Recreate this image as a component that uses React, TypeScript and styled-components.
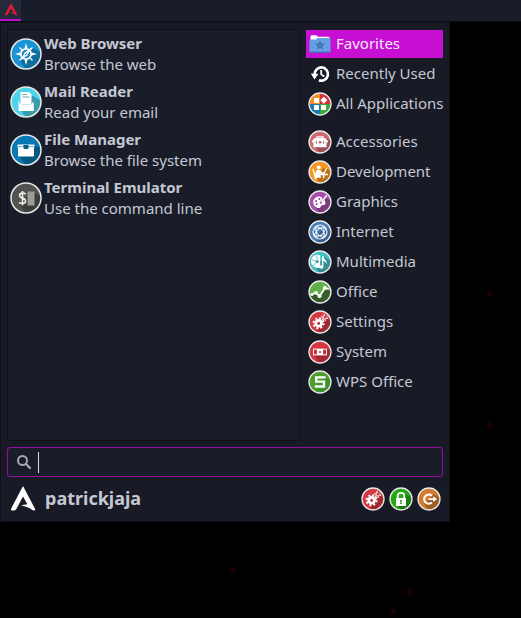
import React from "react";
import styled, { createGlobalStyle } from "styled-components";

const GlobalStyle = createGlobalStyle`
  *, *::before, *::after { box-sizing: border-box; }
  html, body, #root { min-height: 100vh; }
  body {
    margin: 0;
    background: #000;
    color: #c5c8d2;
    font-family: "Noto Sans", sans-serif;
    font-size: 15px;
    line-height: 21px;
  }
  button, input { font: inherit; color: inherit; }
  svg { display: block; flex: none; }
`;

const Desktop = styled.div`
  position: relative;
  min-height: 100vh;
  overflow: hidden;
`;

const Speck = styled.span<{ $x: number; $y: number }>`
  position: absolute;
  left: ${(p) => p.$x}px;
  top: ${(p) => p.$y}px;
  width: 10px;
  height: 12px;
  background: radial-gradient(closest-side, #2c0003, #080001 60%, transparent);
`;

const TopBar = styled.header`
  height: 22px;
  background: #191d29;
  border-bottom: 1px solid #0d0f16;
`;

const MenuButton = styled.button`
  display: flex;
  justify-content: center;
  width: 21px;
  height: 21px;
  padding: 2px 0 0;
  border: 0;
  border-bottom: 2px solid #bd0ecb;
  background: #242a3b;
`;

const Panel = styled.main`
  display: flex;
  flex-direction: column;
  gap: 6px;
  width: min(450px, 100%);
  padding: 6px 6px 7px;
  border: 1px solid #0f1119;
  background: #181a26;
`;

const Columns = styled.div`
  display: grid;
  grid-template-columns: minmax(0, 1fr) 137px;
  gap: 6px;
  min-height: 412px;
`;

const Launchers = styled.ul`
  margin: 0;
  padding: 3px 2px;
  border: 1px solid #0f1119;
  background: #191d29;
  list-style: none;
  display: flex;
  flex-direction: column;
  gap: 6px;
`;

const Launcher = styled.button`
  display: flex;
  align-items: center;
  gap: 2px;
  width: 100%;
  padding: 0;
  border: 0;
  background: none;
  text-align: left;
`;

const LauncherText = styled.span`
  display: flex;
  flex-direction: column;
`;

const Title = styled.strong`
  font-weight: 700;
`;

const Categories = styled.nav`
  display: flex;
  flex-direction: column;
  gap: 10px;
  padding-top: 1px;
`;

const CategoryGroup = styled.div`
  display: flex;
  flex-direction: column;
  gap: 2px;
`;

const Category = styled.button<{ $active?: boolean }>`
  display: flex;
  align-items: center;
  gap: 4px;
  height: 28px;
  padding: 0 0 0 2px;
  border: 0;
  background: ${(p) => (p.$active ? "#c70fd3" : "transparent")};
  color: ${(p) => (p.$active ? "#f3e9f7" : "inherit")};
  text-align: left;
  white-space: nowrap;
`;

const CategoryLabel = styled.span`
  padding-bottom: 2px;
`;

const SearchField = styled.label`
  display: flex;
  align-items: center;
  gap: 6px;
  height: 30px;
  padding: 0 8px;
  border: 1px solid #960da3;
  border-radius: 3px;
  background: #191d29;
`;

const Caret = styled.span`
  width: 1px;
  height: 21px;
  background: #d8dae2;
`;

const SearchInput = styled.input`
  flex: 1;
  min-width: 0;
  padding: 0;
  border: 0;
  outline: 0;
  background: transparent;
`;

const Footer = styled.footer`
  display: flex;
  align-items: center;
  padding-top: 1px;
  height: 31px;
`;

const UserButton = styled.button`
  display: flex;
  align-items: center;
  gap: 8px;
  padding: 0 0 2px 2px;
  border: 0;
  background: none;
  font-size: 18px;
  font-weight: 700;
`;

const Actions = styled.div`
  display: flex;
  gap: 4px;
  margin-left: auto;
  padding-right: 2px;
`;

const ActionButton = styled.button`
  padding: 0;
  border: 0;
  background: none;
`;

type DiscProps = {
  id: string;
  size: number;
  color: string;
  shade: string;
  children: React.ReactNode;
};

function Disc({ id, size, color, shade, children }: DiscProps) {
  const c = size / 2;
  const r = c - 1;
  return (
    <svg width={size} height={size} viewBox={`0 0 ${size} ${size}`} aria-hidden="true">
      <clipPath id={id}>
        <circle cx={c} cy={c} r={r} />
      </clipPath>
      <g clipPath={`url(#${id})`}>
        <rect width={size} height={size} fill={color} />
        <path
          d={`M${c * 0.6} ${c * 1.4}L${c * 1.4} ${c * 0.6}L${size * 1.2} ${size * 0.6}V${size * 1.2}H${size * 0.65}Z`}
          fill={shade}
        />
      </g>
      {children}
      <circle cx={c} cy={c} r={r} fill="none" stroke="#e9e9e5" strokeWidth={size > 24 ? 1.5 : 1.3} />
    </svg>
  );
}

function ArcoLogo({ size, color }: { size: number; color: string }) {
  return (
    <svg width={size} height={size} viewBox="0 0 28 28" aria-hidden="true">
      <path
        d="M14 2L26 24.8Q26.6 26.6 25 26.6Q23 26.4 21.2 24.6Q17.6 22.6 12 21.2L18.4 20.2L14 12.4L7.4 25Q6.6 26.6 4.4 26.6H3Q1.6 26.4 2.2 24.6Z"
        fill={color}
      />
    </svg>
  );
}

const compass = (
  <Disc id="web" size={32} color="#1a94d6" shade="#116d9e">
    <path
      d="M16 5L17.4 10L16 12L14.6 10ZM16 27L17.4 22L16 20L14.6 22ZM5 16L10 14.6L12 16L10 17.4ZM27 16L22 14.6L20 16L22 17.4Z"
      fill="#fff"
    />
    <path d="M9.5 9.5L12 12M20 20L22.5 22.5M20 12L22.5 9.5M9.5 22.5L12 20" stroke="#fff" strokeWidth="1.2" />
    <circle cx="16" cy="16" r="5.2" fill="#1784c0" stroke="#fff" strokeWidth="1.8" />
    <path d="M21.5 9.5L17.4 17.4L10.5 22.5L14.6 14.6Z" fill="#fff" />
    <path d="M14.8 17.2L17.2 14.8" stroke="#1784c0" strokeWidth="1" />
  </Disc>
);

const mail = (
  <Disc id="mail" size={32} color="#4ed3ed" shade="#389eaf">
    <path d="M10.5 6H19L21.5 8.5V20H10.5Z" fill="#fff" />
    <path d="M12.5 8.5H17M12.5 11H19.5" stroke="#69aeba" strokeWidth="1" />
    <path d="M9 14V16.5L11.5 18H21L23.5 16.5V14L24 24Q24 25 23 25H9.5Q8.5 25 8.5 24V15Z" fill="#fff" />
    <path d="M9 15.5L12 18.5H20.5L23.5 15.5" fill="none" stroke="#acdbe2" strokeWidth="0.7" />
  </Disc>
);

const files = (
  <Disc id="files" size={32} color="#0879b4" shade="#065782">
    <path d="M7.5 10.5H24.5V13.5H7.5ZM8 13.4H24V21.5Q24 22.5 23 22.5H9Q8 22.5 8 21.5Z" fill="#fff" />
    <path d="M8 12.6H24" stroke="#5aa0c5" strokeWidth="0.9" />
    <path d="M13.5 11H18.5V14Q18.5 15 17.5 15H14.5Q13.5 15 13.5 14Z" fill="#065d8b" />
  </Disc>
);

const terminal = (
  <Disc id="term" size={32} color="#50534f" shade="#3c3e3b">
    <rect x="17.5" y="9.5" width="7" height="14" fill="#9b9d99" />
    <path
      d="M15.7 12.1Q14.5 11.1 12.5 11.1Q9.6 11.1 9.6 13.5Q9.6 15.3 12.3 16Q15.6 16.8 15.6 19Q15.6 21.5 12.4 21.5Q10.3 21.5 9 20.4M12.5 9V23.5"
      fill="none"
      stroke="#f4f4f2"
      strokeWidth="1.5"
    />
  </Disc>
);

const folder = (
  <svg width="24" height="24" viewBox="0 0 24 24" aria-hidden="true">
    <path d="M2.5 6V4.5Q2.5 3.2 3.8 3.2H8.2L9.8 4.7H20Q21.5 4.7 21.5 6V10H2.5Z" fill="#fff" />
    <path d="M1.5 8.5Q1.5 7.5 2.5 7.5H8L9.5 6H21.5Q22.5 6 22.5 7V19.5Q22.5 20.5 21.5 20.5H2.5Q1.5 20.5 1.5 19.5Z" fill="#66a0e4" />
    <path d="M1.5 20.2H22.5" stroke="#3b65ad" strokeWidth="1" />
    <path
      d="M12 9L13.2 11.8L16.2 12.1L13.9 14.1L14.6 17L12 15.5L9.4 17L10.1 14.1L7.8 12.1L10.8 11.8Z"
      fill="#4a78b8"
      stroke="#416fb0"
      strokeWidth="0.8"
    />
  </svg>
);

const history = (
  <svg width="24" height="24" viewBox="0 0 24 24" aria-hidden="true">
    <path d="M6.8 13A6.6 6.6 0 1 1 10.9 18.2" fill="none" stroke="#fff" strokeWidth="2.7" />
    <path d="M2.8 11.6L10.4 12L6.4 17.4Z" fill="#fff" />
    <path d="M13.2 8V12.4L16.2 14.6" fill="none" stroke="#fff" strokeWidth="1.8" />
  </svg>
);

const allApps = (
  <svg width="24" height="24" viewBox="0 0 24 24" aria-hidden="true">
    <path d="M12 12V1A11 11 0 0 0 1 12Z" fill="#f68b22" />
    <path d="M12 12V1A11 11 0 0 1 23 12Z" fill="#d4303a" />
    <path d="M12 12H1A11 11 0 0 0 12 23Z" fill="#167bb0" />
    <path d="M12 12V23A11 11 0 0 0 23 12Z" fill="#35a93c" />
    <path d="M6 6H11V11H6ZM6 13H11V18H6ZM13 13H18V18H13ZM15.8 4.7L19.3 8.2L15.8 11.7L12.3 8.2Z" fill="#fff" />
    <circle cx="12" cy="12" r="11" fill="none" stroke="#e9e9e5" strokeWidth="1.3" />
  </svg>
);

const toolbox = (
  <Disc id="acc" size={24} color="#cf6a72" shade="#9d4f56">
    <path d="M9 8V6.9H15V8" fill="none" stroke="#fff" strokeWidth="1.2" />
    <path d="M6.8 8H17.2L20 11V12.4H4V11ZM5.4 12.8H18.6V17.3H5.4Z" fill="#fff" />
    <path d="M8.5 10.5V14M15.5 10.5V14" stroke="#c4717a" strokeWidth="0.8" />
    <circle cx="12" cy="12.3" r="1.2" fill="#bc5c66" />
  </Disc>
);

const develop = (
  <Disc id="dev" size={24} color="#f69620" shade="#bb7116">
    <circle cx="10.7" cy="7.4" r="2" fill="#fff" />
    <path d="M8.8 10H12L14 12.2H17V13.7H12.8V17.8H7L6.8 14Z" fill="#fff" />
    <path d="M5 8.8L6.8 16H8.5M6.5 18H9M13 14.5H20M15.7 15V18.2M16.5 13L18.6 7.8" fill="none" stroke="#fff" strokeWidth="1.3" />
  </Disc>
);

const palette = (
  <Disc id="gfx" size={24} color="#a84eae" shade="#7c3a82">
    <path d="M12 6.6C8.2 6.2 5.2 9 5.2 12.2C5.2 15.6 8 18 11 18C13.2 18 12.2 15.7 14 15.2C15.7 14.8 17.7 15.4 17.4 12.4Q17.2 10.4 15.5 9Z" fill="#fff" />
    <circle cx="8.2" cy="11" r="1" fill="#8c4191" />
    <circle cx="11.3" cy="9" r="1" fill="#8c4191" />
    <circle cx="8.7" cy="14.2" r="1" fill="#8c4191" />
    <path d="M12.4 13.3L15.8 8.7" stroke="#8c4191" strokeWidth="2" />
    <path d="M14.5 10.7L18.8 5.3M13.2 12.4L15 10" stroke="#fff" strokeWidth="1.5" />
  </Disc>
);

const globe = (
  <Disc id="net" size={24} color="#467db5" shade="#365f8c">
    <circle cx="12" cy="12" r="7" fill="none" stroke="#f0f5fa" strokeWidth="1.2" />
    <g fill="none" stroke="#f0f5fa" strokeWidth="0.9">
      <ellipse cx="12" cy="12" rx="3" ry="7" transform="rotate(-40 12 12)" />
      <ellipse cx="12" cy="12" rx="3" ry="7" transform="rotate(50 12 12)" />
      <path d="M7 7.5Q12 10 17 7.5M7 16.5Q12 14 17 16.5M7.5 7Q10 12 7.5 17M16.5 7Q14 12 16.5 17" />
    </g>
  </Disc>
);

const media = (
  <Disc id="media" size={24} color="#42c0c5" shade="#318e92">
    <path d="M12.2 5.2A6.6 6.6 0 1 0 12.2 17.4Z" fill="#fff" />
    <path d="M7.8 11L3.8 9.8M8 12.8L5.2 16M9.2 9.5L8.7 5.4" stroke="#47b7bc" strokeWidth="0.8" />
    <circle cx="9.2" cy="11.5" r="1.6" fill="#389fa4" />
    <path d="M14 16.5V6.2H15.4Q15.5 8.5 17.5 10Q19.5 12 18.4 14.2Q18 11.8 15.4 10.8V17" fill="#fff" />
    <ellipse cx="13.3" cy="17" rx="2.1" ry="1.7" fill="#fff" />
  </Disc>
);

const office = (
  <Disc id="office" size={24} color="#62af48" shade="#62af48">
    <path d="M2 15L8 12.5L11.7 16.5L17.3 7.5L22.4 11.5Q21.5 22.4 12 22.4Q4 22 2 15Z" fill="#365c2b" />
    <path d="M3.6 14.5L8 12.8L11.6 16.4L16.8 8.2L20.7 8.8" fill="none" stroke="#fff" strokeWidth="1.7" />
    <g fill="#fff">
      <circle cx="3.9" cy="14.4" r="1.5" />
      <circle cx="8" cy="12.8" r="1.9" />
      <circle cx="11.6" cy="16.2" r="1.9" />
      <circle cx="16.9" cy="8" r="2" />
    </g>
  </Disc>
);

function Gears({ id }: { id: string }) {
  return (
    <Disc id={id} size={24} color="#d43a43" shade="#a12830">
      <circle cx="10.6" cy="13.2" r="2.9" fill="none" stroke="#fff" strokeWidth="2.8" />
      <circle cx="10.6" cy="13.2" r="5" fill="none" stroke="#fff" strokeWidth="2" strokeDasharray="2 1.93" />
      <circle cx="16.6" cy="7.5" r="1.7" fill="none" stroke="#fff" strokeWidth="1.1" strokeDasharray="8 2.68" />
      <circle cx="16.6" cy="7.5" r="2.9" fill="none" stroke="#fff" strokeWidth="1.2" strokeDasharray="1.3 1.74" />
      <path d="M16.6 7.5L18.6 5.2" stroke="#c63a42" strokeWidth="1.4" />
    </Disc>
  );
}

const system = (
  <Disc id="sys" size={24} color="#d4353f" shade="#a12830">
    <rect x="5.7" y="9.2" width="12.6" height="5.6" fill="none" stroke="#fff" strokeWidth="1.2" />
    <path d="M6.3 9.8H8.6V14.2H6.3ZM15.4 9.8H17.7V14.2H15.4Z" fill="#a52933" />
    <path d="M8.8 9H15.2V15H8.8Z" fill="#fff" />
    <rect x="10.7" y="11" width="2.6" height="2" fill="#ce7078" />
  </Disc>
);

const wps = (
  <Disc id="wps" size={24} color="#4a9d2f" shade="#40932a">
    <path d="M17.6 7.4H8.2V11.6H16V16.5H6.8" fill="none" stroke="#fff" strokeWidth="2.3" />
  </Disc>
);

const lock = (
  <Disc id="lock" size={24} color="#24a815" shade="#1c7c14">
    <path d="M8.7 12V8.6Q8.7 5.8 12 5.8Q15.3 5.8 15.3 8.6V12" fill="none" stroke="#fff" strokeWidth="1.8" />
    <rect x="7" y="11" width="10" height="8" fill="#fff" />
    <path d="M12 13V17" stroke="#238d19" strokeWidth="1.6" />
    <path d="M11 15.2H13" stroke="#fff" strokeWidth="0.5" />
  </Disc>
);

const logout = (
  <Disc id="logout" size={24} color="#d27b30" shade="#9e5d24">
    <path d="M14.9 8.7A4.6 4.6 0 1 0 14.9 15.5" fill="none" stroke="#fff" strokeWidth="2.2" />
    <path d="M11.5 12.1H17" stroke="#fff" strokeWidth="1.7" />
    <path d="M16.3 9.3L20 12.1L16.3 14.9Z" fill="#fff" />
  </Disc>
);

const magnifier = (
  <svg width="16" height="16" viewBox="0 0 16 16" aria-hidden="true">
    <circle cx="6.5" cy="6.5" r="4.5" fill="none" stroke="#a5a8b2" strokeWidth="2" />
    <path d="M9.8 9.8L14.6 14.6" stroke="#a5a8b2" strokeWidth="2.2" />
  </svg>
);

const launchers = [
  { title: "Web Browser", note: "Browse the web", icon: compass },
  { title: "Mail Reader", note: "Read your email", icon: mail },
  { title: "File Manager", note: "Browse the file system", icon: files },
  { title: "Terminal Emulator", note: "Use the command line", icon: terminal },
];

type CategoryItem = { label: string; icon: React.ReactNode; active?: boolean };

const groups: CategoryItem[][] = [
  [
    { label: "Favorites", icon: folder, active: true },
    { label: "Recently Used", icon: history },
    { label: "All Applications", icon: allApps },
  ],
  [
    { label: "Accessories", icon: toolbox },
    { label: "Development", icon: develop },
    { label: "Graphics", icon: palette },
    { label: "Internet", icon: globe },
    { label: "Multimedia", icon: media },
    { label: "Office", icon: office },
    { label: "Settings", icon: <Gears id="settings" /> },
    { label: "System", icon: system },
    { label: "WPS Office", icon: wps },
  ],
];

const specks = [
  [485, 288],
  [485, 419],
  [228, 564],
  [405, 586],
  [388, 605],
];

export default function App() {
  return (
    <>
      <GlobalStyle />
      <Desktop>
        {specks.map(([x, y]) => (
          <Speck key={`${x}-${y}`} $x={x} $y={y} />
        ))}
        <TopBar>
          <MenuButton aria-label="Applications menu">
            <ArcoLogo size={14} color="#e01c36" />
          </MenuButton>
        </TopBar>
        <Panel>
          <Columns>
            <Launchers>
              {launchers.map((l) => (
                <li key={l.title}>
                  <Launcher>
                    {l.icon}
                    <LauncherText>
                      <Title>{l.title}</Title>
                      <span>{l.note}</span>
                    </LauncherText>
                  </Launcher>
                </li>
              ))}
            </Launchers>
            <Categories aria-label="Categories">
              {groups.map((group) => (
                <CategoryGroup key={group[0].label}>
                  {group.map((c) => (
                    <Category key={c.label} $active={c.active}>
                      {c.icon}
                      <CategoryLabel>{c.label}</CategoryLabel>
                    </Category>
                  ))}
                </CategoryGroup>
              ))}
            </Categories>
          </Columns>
          <SearchField>
            {magnifier}
            <Caret />
            <SearchInput type="text" aria-label="Search applications" />
          </SearchField>
          <Footer>
            <UserButton>
              <ArcoLogo size={28} color="#fff" />
              patrickjaja
            </UserButton>
            <Actions>
              <ActionButton aria-label="All Settings">
                <Gears id="all-settings" />
              </ActionButton>
              <ActionButton aria-label="Lock Screen">{lock}</ActionButton>
              <ActionButton aria-label="Log Out">{logout}</ActionButton>
            </Actions>
          </Footer>
        </Panel>
      </Desktop>
    </>
  );
}
